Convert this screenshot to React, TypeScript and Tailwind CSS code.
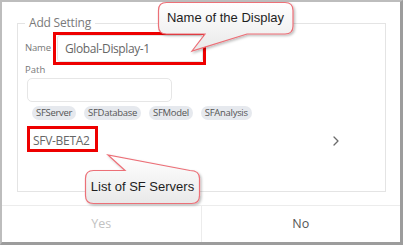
import React from 'react';

const uiFont = "font-['Open_Sans','Segoe_UI',sans-serif]";

const tags = ['SFServer', 'SFDatabase', 'SFModel', 'SFAnalysis'];

const CalloutShapes: React.FC = () => (
  <svg
    className="absolute left-0 top-0 pointer-events-none"
    width={403}
    height={245}
    viewBox="0 0 403 245"
  >
    <defs>
      <linearGradient id="bubbleFill" x1="0" y1="0" x2="0" y2="1">
        <stop offset="0" stopColor="#ffffff" />
        <stop offset="1" stopColor="#e9e9e9" />
      </linearGradient>
      <filter id="bubbleShadow" x="-10%" y="-10%" width="130%" height="140%">
        <feDropShadow dx="1.5" dy="1.5" stdDeviation="1.2" floodColor="#000" floodOpacity="0.25" />
      </filter>
    </defs>
    <path
      d="M166.5,2.5 H285 Q293,2.5 293,10.5 V26 Q293,34 285,34 H247 L192,51 L205,34 H166.5 Q158.5,34 158.5,26 V10.5 Q158.5,2.5 166.5,2.5 Z"
      fill="url(#bubbleFill)"
      stroke="#ec6f77"
      strokeWidth="1.2"
      filter="url(#bubbleShadow)"
    />
    <path
      d="M93.5,170.5 H125 L108,155 L190,170.5 Q199.5,170.5 199.5,178.5 V195.5 Q199.5,203.5 191.5,203.5 H93.5 Q85.5,203.5 85.5,195.5 V178.5 Q85.5,170.5 93.5,170.5 Z"
      fill="url(#bubbleFill)"
      stroke="#ec6f77"
      strokeWidth="1.2"
      filter="url(#bubbleShadow)"
    />
  </svg>
);

export default function App() {
  return (
    <div className="relative w-[403px] h-[245px] bg-white overflow-hidden">
      <div className="flex flex-col w-full h-full border-l-2 border-t-2 border-r-[3px] border-b-[3px] border-l-[#bdbdbd] border-t-[#bdbdbd] border-r-[#9c9c9c] border-b-[#9c9c9c]">
        <fieldset
          className={`mt-[14px] ml-[15px] mr-[14px] h-[176px] border border-[#e4e4e4] px-[7px] ${uiFont}`}
        >
          <legend className="px-[4px] text-[12px] leading-[14px] tracking-[-0.2px] text-[#7a7a7a]">
            Add Setting
          </legend>

          <div className="flex items-center mt-[5px]">
            <span className="w-[32px] text-[9.5px] tracking-[-0.2px] text-[#777]">Name</span>
            <div className="flex items-center w-[146px] h-[27px] border border-[#e6e6e6] rounded-[3px] px-[7px] text-[12px] tracking-[-0.4px] text-[#666]">
              Global-Display-1
            </div>
          </div>

          <div className="mt-[2px] text-[9.5px] leading-[12px] text-[#777]">Path</div>
          <div className="ml-[2px] mt-[2px] w-[145px] h-[24px] border border-[#e6e6e6] rounded-[5px]" />

          <div className="flex items-center gap-[8px] ml-[7px] mt-[4px]">
            {tags.map((t) => (
              <span
                key={t}
                className="h-[14px] px-[4px] rounded-full bg-[#e6e9ee] text-[9.5px] leading-[14px] tracking-[-0.3px] text-[#555]"
              >
                {t}
              </span>
            ))}
          </div>

          <div className="flex items-center justify-between h-[20px] mt-[11px] pl-[8px] pr-[39px]">
            <span className="text-[12px] tracking-[-0.3px] text-[#666]">SFV-BETA2</span>
            <svg width="6" height="10" viewBox="0 0 6 10" className="text-[#6b6b6b]">
              <path d="M1 1 L5 5 L1 9" fill="none" stroke="currentColor" strokeWidth="1.3" strokeLinecap="round" strokeLinejoin="round" />
            </svg>
          </div>
        </fieldset>

        <div className={`mt-auto flex h-[37px] border-t border-[#ececec] text-[12.5px] ${uiFont}`}>
          <button className="flex-1 flex items-center justify-center text-[#c2c2c2] border-r border-[#ececec]">
            Yes
          </button>
          <button className="flex-1 flex items-center justify-center text-[#555]">No</button>
        </div>
      </div>

      {/* highlight boxes */}
      <div className="absolute left-[53px] top-[32px] w-[153px] h-[33px] border-[3px] border-[#ee0000]" />
      <div className="absolute left-[27px] top-[126px] w-[71px] h-[26px] border-[3px] border-[#ee0000]" />

      <CalloutShapes />
      <div className="absolute left-[158px] top-[2px] w-[135px] h-[32px] flex items-center justify-center font-['Liberation_Sans',Arial,sans-serif] text-[13px] text-[#1e1e1e]">
        Name of the Display
      </div>
      <div className="absolute left-[85px] top-[170px] w-[115px] h-[34px] flex items-center justify-center font-['Liberation_Sans',Arial,sans-serif] text-[13px] text-[#1e1e1e]">
        List of SF Servers
      </div>
    </div>
  );
}
